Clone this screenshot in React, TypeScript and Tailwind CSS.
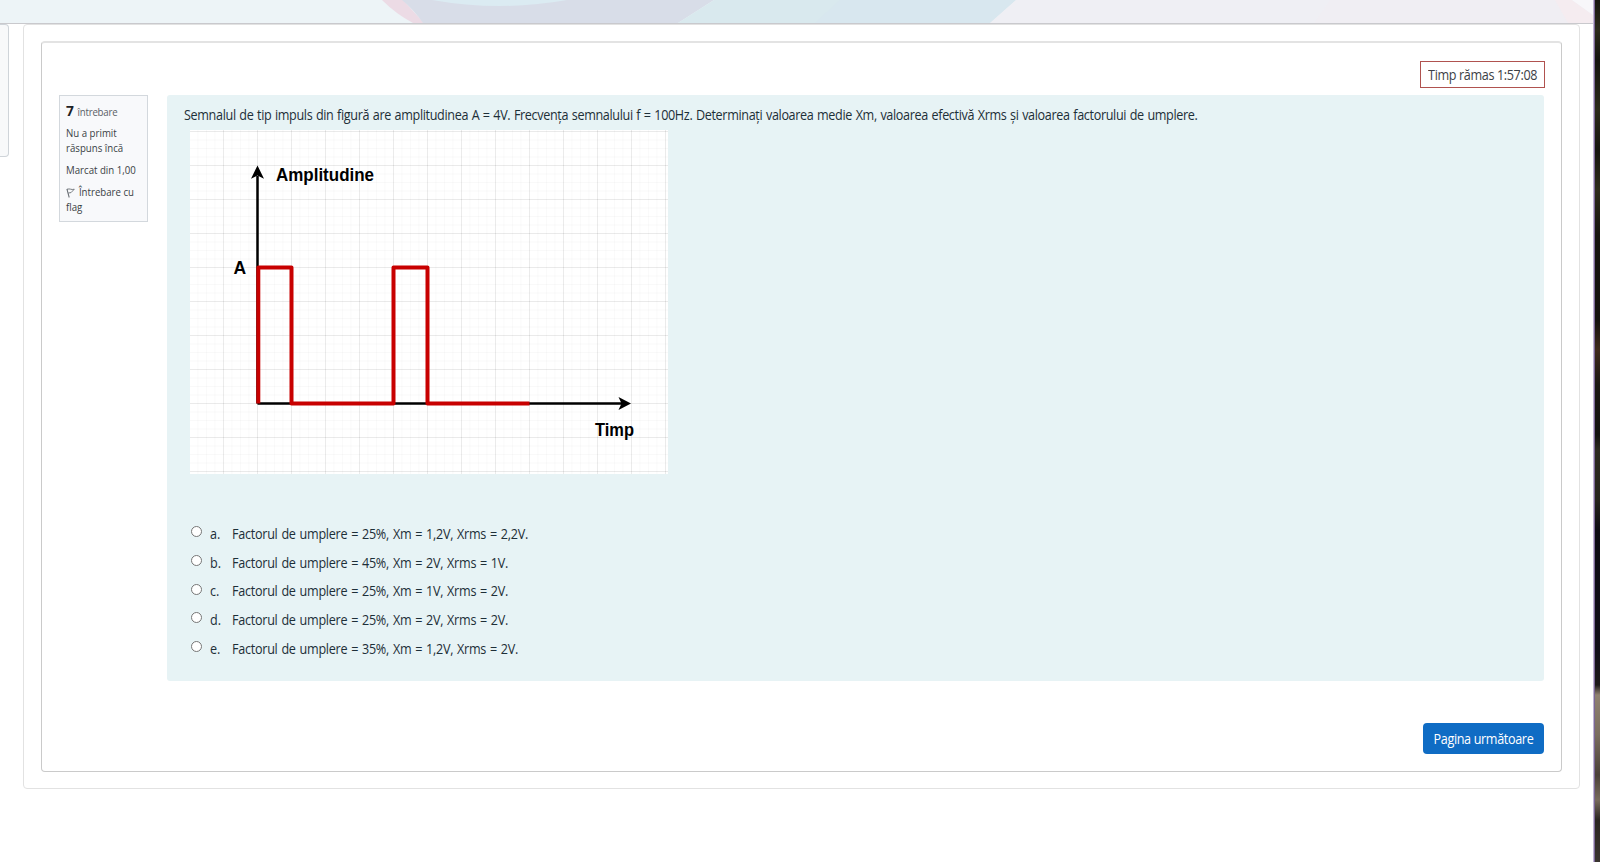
const steps: number[] = Array.from({ length: 60 }, (_, i) => i);

function HeaderArt() {
  return (
    <svg width="1593" height="23" viewBox="0 0 1593 23" preserveAspectRatio="none" className="block">
      <rect width="1593" height="23" fill="#edf4f7" />
      <path d="M382 0H403L424 23H413Q396 14 382 0Z" fill="#ecdbe5" />
      <path d="M402 0H714L678 23H423Q414 10 402 0Z" fill="#d8dde8" />
      <path d="M432 0Q500 12 567 0Z" fill="#dbebf2" />
      <path d="M714 0H1016L990 23H678Z" fill="#d9e9ee" />
      <path d="M840 0H1016L990 23H815Z" fill="#d8e7ef" />
      <path d="M1016 0H1593V23H990Z" fill="#efeff4" />
      <path d="M1330 0H1555L1570 23H1314Z" fill="#f0eef3" />
      <path d="M1555 0H1572L1593 15V23H1568Z" fill="#f5ecf0" />
      <path d="M1572 0H1593V15Z" fill="#f8f7fa" />
    </svg>
  );
}

function Chart() {
  return (
    <svg width="478" height="344" viewBox="0 0 478 344" className="block bg-white">
      {steps.map((i) => (
        <g key={i} stroke="#000" strokeOpacity=".022">
          <path d={`M${7.9 + i * 8.5} 0V344`} />
          <path d={`M0 ${1.5 + i * 8.5}H478`} />
        </g>
      ))}
      {steps.slice(0, 14).map((i) => (
        <g key={i} stroke="#000" strokeOpacity=".06">
          <path d={`M${33.5 + i * 34} 0V344`} />
          <path d={`M0 ${1.5 + i * 34}H478`} />
        </g>
      ))}
      <path d="M67.500 273.500V46M67.500 273.500H434" stroke="#000" strokeWidth="2.500" fill="none" />
      <path d="M67.500 35.500L74 48.700L67.500 45.500L61 48.700Z" />
      <path d="M441 273.500L428.500 280L431.500 273.500L428.500 267Z" />
      <path d="M68.300 273.500V137.500H101.500V273.500H203.500V137.500H237.500V273.500H339.500" stroke="#c80000" strokeWidth="4" strokeLinejoin="round" fill="none" />
      <g fontFamily="Liberation Sans" fontWeight="700" fontSize="17.500">
        <text x="86" y="50.700" textLength="98" lengthAdjust="spacingAndGlyphs">Amplitudine</text>
        <text x="43.500" y="144">A</text>
        <text x="405" y="305.500" textLength="39" lengthAdjust="spacingAndGlyphs">Timp</text>
      </g>
    </svg>
  );
}

function FlagIcon() {
  return (
    <svg width="10" height="10" viewBox="0 0 9 10" className="mr-[4px] inline-block align-[-2px]" fill="none" stroke="#666c72">
      <path d="M0.500 1L3 9.500" strokeWidth="1.100" />
      <path d="M0.500 1.300Q3 0.600 4.500 1.200T8.500 1.200L5 4.600L2 5" strokeWidth=".9" />
    </svg>
  );
}

const answers = [
  ["a.", "Factorul de umplere = 25%, Xm = 1,2V, Xrms = 2,2V."],
  ["b.", "Factorul de umplere = 45%, Xm = 2V, Xrms = 1V."],
  ["c.", "Factorul de umplere = 25%, Xm = 1V, Xrms = 2V."],
  ["d.", "Factorul de umplere = 25%, Xm = 2V, Xrms = 2V."],
  ["e.", "Factorul de umplere = 35%, Xm = 1,2V, Xrms = 2V."],
];

export default function App() {
  return (
    <div className="flex h-[862px] w-[1600px] overflow-hidden bg-white font-['Open_Sans',sans-serif] text-[14px] text-[#1d2f38]">
      <div className="flex w-[1593px] shrink-0 flex-col">
        <header className="h-[24px] shrink-0 border-b border-[#c9c9cd]">
          <HeaderArt />
        </header>
        <div className="flex">
          <aside className="h-[133px] w-[9px] rounded-r border-t border-r border-b border-[#cfd4d9] bg-[#f8f9fa]" />
          <main className="ml-[14px] h-[765px] w-[1557px] rounded border border-[#e2e2e2] px-[17px] pt-[16px]">
            <div className="flex h-[731px] w-[1521px] flex-col rounded border border-t-2 border-[#cacaca] border-t-[#e3e3e3] px-[17px]">
              <div className="mt-[18px] -mr-px flex h-[27px] w-[125px] shrink-0 items-center justify-center self-end border border-[#b0524f] bg-white text-[#3c4146]">
                <span className="scale-x-[.9] tracking-[-0.4px] whitespace-nowrap">Timp rămas 1:57:08</span>
              </div>
              <div className="mt-[7px] flex">
                <section className="h-[127px] w-[89px] border border-[#d3d8dd] bg-[#f8f9fb] pt-[4px] pl-[6px] text-[10.500px] leading-[15px] whitespace-nowrap text-[#3a3f45]">
                  <div className="origin-left scale-x-[.92]">
                    <h3 className="h-[20px] leading-[20px]">
                      <span className="text-[15px] font-bold text-[#1d2125]">7</span>
                      <span className="ml-[4px] tracking-[-0.25px] text-[#5a6066]">întrebare</span>
                    </h3>
                    <p className="mt-[6px]">Nu a primit<br />răspuns încă</p>
                    <p className="mt-[7px]">Marcat din 1,00</p>
                    <p className="mt-[7px]"><FlagIcon />Întrebare cu<br />flag</p>
                  </div>
                </section>
                <section className="ml-[19px] h-[586px] w-[1377px] rounded-[3px] bg-[#e7f3f5] pt-[10px] pl-[17px]">
                  <p className="origin-left scale-x-[.9] leading-[20px] tracking-[-0.38px] whitespace-nowrap [word-spacing:0.72px]">
                    Semnalul de tip impuls din figură are amplitudinea A = 4V. Frecvența semnalului f = 100Hz. Determinați valoarea medie Xm, valoarea efectivă Xrms și valoarea factorului de umplere.
                  </p>
                  <div className="mt-[5px] ml-[6px]"><Chart /></div>
                  <div className="mt-[45px] ml-[7px]">
                    {answers.map(([letter, text]) => (
                      <label key={letter} className="flex h-[28.700px] items-center whitespace-nowrap">
                        <input type="radio" name="answer" className="-mt-[3px] size-[11px] appearance-none rounded-full border border-[#767676] bg-white" />
                        <span className="ml-[8px] w-[22px] origin-left scale-x-[.9]">{letter}</span>
                        <span className="origin-left scale-x-[.9] tracking-[-0.3px] [word-spacing:1px]">{text}</span>
                      </label>
                    ))}
                  </div>
                </section>
              </div>
              <button className="mt-[42px] flex h-[31px] w-[121px] shrink-0 items-center justify-center self-end rounded-[4px] bg-[#0f6cc4] text-white">
                <span className="scale-x-[.9] tracking-[-0.39px] whitespace-nowrap">Pagina următoare</span>
              </button>
            </div>
          </main>
        </div>
      </div>
      <div className="w-[2px] shrink-0 bg-linear-to-r from-[#e4daf0] to-[#5a4478]" />
      <div className="w-[5px] shrink-0 bg-[linear-gradient(to_bottom,#17160f_0px,#2c2b1c_30px,#14130f_60px,#2b2a1a_110px,#15140f_150px,#2e2c1b_190px,#16140f_235px,#14110e_320px,#3f2a1c_350px,#1a1713_385px,#12110f_435px,#2c2a20_450px,#26241d_500px,#0c0a12_530px,#110e18_650px,#1c1819_685px,#8f8170_695px,#7a6d5f_735px,#4a4038_775px,#776a5c_800px,#2a2521_820px,#3a342f_862px)]" />
    </div>
  );
}
